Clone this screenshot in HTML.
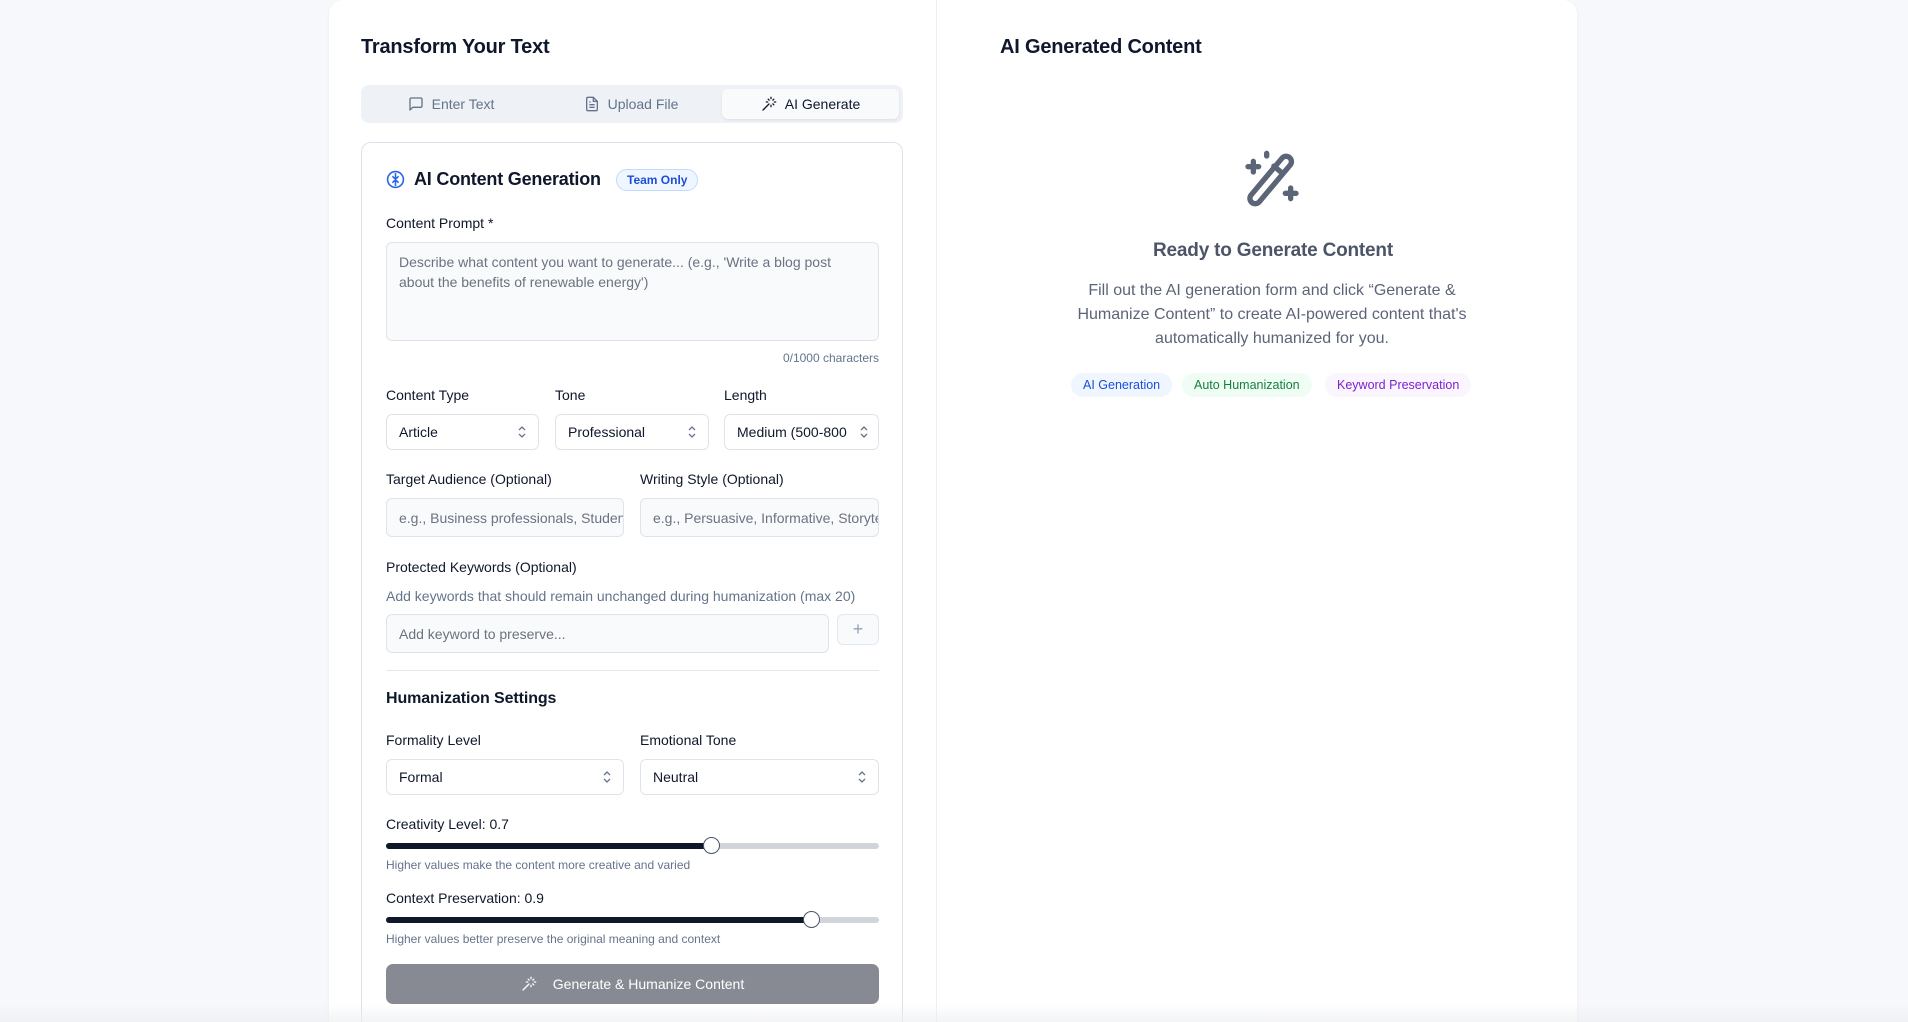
<!DOCTYPE html>
<html style="overflow:hidden;width:1908px;height:1022px"><head><meta charset="utf-8"><style>
*{box-sizing:border-box;margin:0;padding:0}
body{width:1908px;height:1022px;overflow:hidden;background:#f7f8fc;font-family:"Liberation Sans",sans-serif;color:#0f172a;position:relative}
.card{position:absolute;left:329px;top:0;width:1248px;height:1022px;background:#fff;border-radius:14px 14px 0 0;box-shadow:0 1px 3px rgba(0,0,0,.06)}
.divider{position:absolute;left:936px;top:0;width:1px;height:1022px;background:#eceef2}
.abs{position:absolute}
h2{position:absolute;font-size:20px;font-weight:600;color:#0f172a}
.tabs{position:absolute;left:361px;top:85px;width:542px;height:38px;background:#eef1f5;border-radius:8px}
.tab{position:absolute;top:0;height:38px;display:flex;align-items:center;justify-content:center;gap:8px;font-size:14px;color:#64748b}
.tab.act{top:4px;height:30px;background:#f8fafc;border-radius:6px;color:#0f172a;box-shadow:0 1px 2px rgba(0,0,0,.08)}
.inner{position:absolute;left:361px;top:142px;width:542px;height:900px;border:1px solid #dde3ec;border-radius:10px}
.lbl{position:absolute;font-size:14px;color:#0f172a}
.field{position:absolute;border:1px solid #dfe4ea;border-radius:6px;background:#fff;font-size:14px;color:#0f172a;display:flex;align-items:center;padding-left:12px}
.ph{color:#6b7280;background:#f8fafc;overflow:hidden;white-space:nowrap}
.chev{position:absolute;right:12px;top:50%;margin-top:-6px}
.small{position:absolute;font-size:12px;color:#64748b}
.track{position:absolute;height:6px;background:#d1d5db;border-radius:3px}
.fill{position:absolute;left:0;top:0;height:6px;background:#0f172a;border-radius:3px}
.thumb{position:absolute;top:-6px;width:17px;height:17px;border-radius:50%;background:#fff;border:1.5px solid #475569}
.pill{position:absolute;top:373px;height:24px;border-radius:12px;font-size:12.5px;display:flex;align-items:center;padding:0 12px}
</style></head><body>
<div class="card"></div>
<div class="divider"></div>
<h2 style="left:361px;top:36px;font-weight:600;letter-spacing:-0.2px">Transform Your Text</h2>
<h2 style="left:1000px;top:36px;letter-spacing:-0.2px">AI Generated Content</h2>

<div class="tabs">
 <div class="tab" style="left:0;width:180px"><svg width="16" height="16" viewBox="0 0 24 24" fill="none" stroke="#64748b" stroke-width="2" stroke-linejoin="round"><path d="M21 15a2 2 0 0 1-2 2H7l-4 4V5a2 2 0 0 1 2-2h14a2 2 0 0 1 2 2z"/></svg>Enter Text</div>
 <div class="tab" style="left:180px;width:180px"><svg width="16" height="16" viewBox="0 0 24 24" fill="none" stroke="#64748b" stroke-width="2" stroke-linejoin="round"><path d="M14 2H6a2 2 0 0 0-2 2v16a2 2 0 0 0 2 2h12a2 2 0 0 0 2-2V8z"/><path d="M14 2v6h6M16 13H8M16 17H8M10 9H8"/></svg>Upload File</div>
 <div class="tab act" style="left:361px;width:177px"><svg width="16" height="16" viewBox="0 0 24 24" fill="none" stroke="#0f172a" stroke-width="2" stroke-linecap="round"><path d="M15 4V2M15 16v-2M8 9h2M20 9h2M17.8 11.8l1.4 1.4M17.8 6.2l1.4-1.4M3 21l9-9M12.2 6.2 10.8 4.8"/></svg>AI Generate</div>
</div>

<div class="inner"></div>
<svg class="abs" style="left:386px;top:170px" width="19" height="19" viewBox="0 0 24 24" fill="none" stroke="#2563eb" stroke-width="2"><circle cx="12" cy="12" r="10"/><path d="M12 4v16M8 8c2 1 2 3 4 3s2-2 4-3M8 16c2-1 2-3 4-3s2 2 4 3"/></svg>
<div class="abs" style="left:414px;top:169px;font-size:18px;font-weight:600;letter-spacing:-0.2px">AI Content Generation</div>
<div class="abs" style="left:616px;top:169px;height:22px;padding:0 10px;border:1px solid #bfdbfe;background:#eff6ff;color:#1d4ed8;border-radius:11px;font-size:12px;font-weight:600;line-height:20px">Team Only</div>

<div class="lbl" style="left:386px;top:215px">Content Prompt *</div>
<div class="field ph" style="left:386px;top:242px;width:493px;height:99px;align-items:flex-start;padding:9px 24px 0 12px;line-height:20px;white-space:normal;font-size:14px">Describe what content you want to generate... (e.g., 'Write a blog post about the benefits of renewable energy')</div>
<div class="small" style="right:1029px;top:351px">0/1000 characters</div>

<div class="lbl" style="left:386px;top:387px">Content Type</div>
<div class="lbl" style="left:555px;top:387px">Tone</div>
<div class="lbl" style="left:724px;top:387px">Length</div>
<div class="field" style="left:386px;top:414px;width:153px;height:36px">Article<svg class="chev" width="8" height="12" viewBox="0 0 8 12" fill="none" stroke="#64748b" stroke-width="1.3"><path d="M1 4l3-3 3 3M1 8l3 3 3-3"/></svg></div>
<div class="field" style="left:555px;top:414px;width:154px;height:36px">Professional<svg class="chev" width="8" height="12" viewBox="0 0 8 12" fill="none" stroke="#64748b" stroke-width="1.3"><path d="M1 4l3-3 3 3M1 8l3 3 3-3"/></svg></div>
<div class="field" style="left:724px;top:414px;width:155px;height:36px;overflow:hidden;white-space:nowrap">Medium (500-800<svg class="chev" width="8" height="12" viewBox="0 0 8 12" fill="none" stroke="#64748b" stroke-width="1.3" style="right:10px;background:#fff"><path d="M1 4l3-3 3 3M1 8l3 3 3-3"/></svg></div>

<div class="lbl" style="left:386px;top:471px">Target Audience (Optional)</div>
<div class="lbl" style="left:640px;top:471px">Writing Style (Optional)</div>
<div class="field ph" style="left:386px;top:498px;width:238px;height:39px">e.g., Business professionals, Students</div>
<div class="field ph" style="left:640px;top:498px;width:239px;height:39px">e.g., Persuasive, Informative, Storytelling</div>

<div class="lbl" style="left:386px;top:559px">Protected Keywords (Optional)</div>
<div class="abs" style="left:386px;top:588px;font-size:14px;color:#64748b">Add keywords that should remain unchanged during humanization (max 20)</div>
<div class="field ph" style="left:386px;top:614px;width:443px;height:39px">Add keyword to preserve...</div>
<div class="abs" style="left:837px;top:614px;width:42px;height:31px;border:1px solid #e2e8f0;border-radius:6px;background:#f8fafc;color:#94a3b8;font-size:18px;text-align:center;line-height:28px">+</div>

<div class="abs" style="left:386px;top:670px;width:493px;height:1px;background:#e5e7eb"></div>
<div class="abs" style="left:386px;top:690px;font-size:16px;font-weight:600;letter-spacing:-0.1px">Humanization Settings</div>

<div class="lbl" style="left:386px;top:732px">Formality Level</div>
<div class="lbl" style="left:640px;top:732px">Emotional Tone</div>
<div class="field" style="left:386px;top:759px;width:238px;height:36px">Formal<svg class="chev" width="8" height="12" viewBox="0 0 8 12" fill="none" stroke="#64748b" stroke-width="1.3"><path d="M1 4l3-3 3 3M1 8l3 3 3-3"/></svg></div>
<div class="field" style="left:640px;top:759px;width:239px;height:36px">Neutral<svg class="chev" width="8" height="12" viewBox="0 0 8 12" fill="none" stroke="#64748b" stroke-width="1.3"><path d="M1 4l3-3 3 3M1 8l3 3 3-3"/></svg></div>

<div class="lbl" style="left:386px;top:816px">Creativity Level: 0.7</div>
<div class="track" style="left:386px;top:843px;width:493px"><div class="fill" style="width:326px"></div><div class="thumb" style="left:317px"></div></div>
<div class="small" style="left:386px;top:858px">Higher values make the content more creative and varied</div>
<div class="lbl" style="left:386px;top:890px">Context Preservation: 0.9</div>
<div class="track" style="left:386px;top:917px;width:493px"><div class="fill" style="width:426px"></div><div class="thumb" style="left:417px"></div></div>
<div class="small" style="left:386px;top:932px">Higher values better preserve the original meaning and context</div>

<div class="abs" style="left:386px;top:964px;width:493px;height:40px;background:#878a93;border-radius:7px;color:#fff;font-size:14px;display:flex;align-items:center;justify-content:center;gap:16px"><svg width="16" height="16" viewBox="0 0 24 24" fill="none" stroke="#fff" stroke-width="2" stroke-linecap="round"><path d="M15 4V2M15 16v-2M8 9h2M20 9h2M17.8 11.8l1.4 1.4M17.8 6.2l1.4-1.4M3 21l9-9M12.2 6.2 10.8 4.8"/></svg>Generate &amp; Humanize Content</div>
<div class="abs" style="left:0;top:1004px;width:1908px;height:18px;background:linear-gradient(rgba(255,255,255,0),rgba(235,236,240,.6))"></div>

<svg class="abs" style="left:1240px;top:148px" width="64" height="64" viewBox="0 0 24 24" fill="none" stroke="#5b6577" stroke-width="2" stroke-linecap="round" stroke-linejoin="round"><rect x="9.5" y="1" width="4" height="22" rx="2" transform="rotate(40 11.5 12)"/><path d="M12.7 6.8l3 2.5"/><path d="M5 5v4M3 7h4M19 15v4M17 17h4M10 2v1"/></svg>
<div class="abs" style="left:937px;top:240px;width:672px;text-align:center;font-size:19px;font-weight:600;color:#4b5567;letter-spacing:-0.2px">Ready to Generate Content</div>
<div class="abs" style="left:1062px;top:279px;width:420px;text-align:center;font-size:16px;line-height:24px;color:#5b6577">Fill out the AI generation form and click “Generate &amp; Humanize Content” to create AI-powered content that's automatically humanized for you.</div>
<div class="pill" style="left:1071px;background:#eff6ff;color:#1d4ed8">AI Generation</div>
<div class="pill" style="left:1182px;background:#f0fdf4;color:#15803d">Auto Humanization</div>
<div class="pill" style="left:1325px;background:#faf5ff;color:#7e22ce">Keyword Preservation</div>
</body></html>
